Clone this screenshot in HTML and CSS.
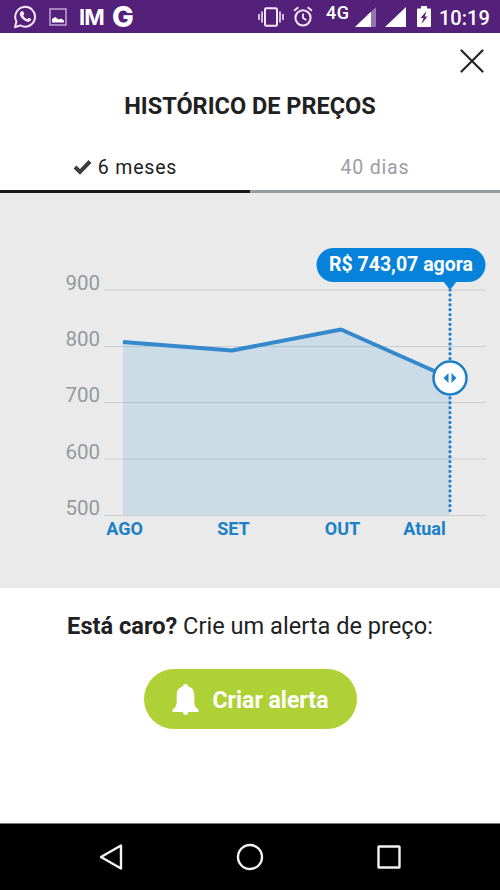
FILE: index.html
```html
<!DOCTYPE html>
<html lang="pt-BR">
<head>
  <meta charset="UTF-8">
  <meta name="viewport" content="width=device-width, initial-scale=1.0">
  <title>Histórico de preços</title>
  <link rel="stylesheet" href="styles.css">
</head>
<body>

  <!-- Status Bar -->
  <div class="status-bar">
    <div class="status-left">
      <svg class="icon-whatsapp" width="24" height="25" viewBox="0 0 24 25">
        <path d="M2 23.2 L3.4 17.4 A9.9 9.9 0 1 1 7.3 21.4 Z" fill="none" stroke="#f6e6fb" stroke-width="2" stroke-linejoin="round"/>
        <path d="M8.7 7.2 L10.2 7.3 L11.3 10 L10.2 11.5 C11.2 13.4 12.5 14.5 14.2 15.2 L15.6 13.8 L18.2 15.1 C18.2 17 16.6 18 15 17.9 C11 17.3 7.4 13.9 6.8 10.1 C6.7 8.7 7.6 7.5 8.7 7.2 Z" fill="#f6e6fb"/>
      </svg>
      <svg class="icon-image" width="18" height="18" viewBox="0 0 18 18">
        <rect x="1" y="1" width="16" height="16" fill="none" stroke="#bd9bd0" stroke-width="1.6"/>
        <path d="M3 14.5 V11 L6 9 L10 11.5 L12 10.5 L15 12.5 V14.5 Z" fill="#fff"/>
      </svg>
      <span class="app-im">IM</span>
      <span class="app-g">G</span>
    </div>
    <div class="status-right">
      <svg class="icon-vibrate" width="26" height="20" viewBox="0 0 26 20">
        <rect x="7" y="1.2" width="12" height="17.6" rx="1.2" fill="none" stroke="#f6e6fb" stroke-width="2"/>
        <path d="M1 7 V13 M4 4.5 V15.5 M22 4.5 V15.5 M25 7 V13" stroke="#f6e6fb" stroke-width="1.6"/>
      </svg>
      <svg class="icon-alarm" width="20" height="21" viewBox="0 0 20 21">
        <circle cx="10" cy="11.8" r="7.6" fill="none" stroke="#f6e6fb" stroke-width="2"/>
        <path d="M1 4.8 L5.4 1.2 M19 4.8 L14.6 1.2 M10 7.5 V12 L13.3 14" fill="none" stroke="#f6e6fb" stroke-width="1.8"/>
      </svg>
      <span class="network">4G</span>
      <svg class="icon-signal" width="22" height="20" viewBox="0 0 22 20">
        <path d="M0 20 L21 0 V20 Z" fill="#9673af"/>
        <path d="M0 20 L16 4.8 V20 Z" fill="#fff"/>
      </svg>
      <svg class="icon-signal-full" width="21" height="20" viewBox="0 0 21 20">
        <path d="M0 20 L21 0 V20 Z" fill="#fff"/>
      </svg>
      <svg class="icon-battery" width="14" height="21" viewBox="0 0 14 21">
        <path d="M4 0 H10 V2.4 H13 Q14 2.4 14 3.4 V20 Q14 21 13 21 H1 Q0 21 0 20 V3.4 Q0 2.4 1 2.4 H4 Z" fill="#fff"/>
        <path d="M9.5 5 L3.5 12 H6.5 L4.5 18 L10.5 10.5 H7.7 Z" fill="#53207a"/>
      </svg>
      <span class="clock">10:19</span>
    </div>
  </div>

  <!-- Price History -->
  <div class="header">
    <button class="close" aria-label="Fechar">
      <svg width="24" height="24" viewBox="0 0 24 24">
        <path d="M1.500 1.500 L22.500 22.500 M22.500 1.500 L1.500 22.500" stroke="#252525" stroke-width="2.2" stroke-linecap="round"/>
      </svg>
    </button>
    <h1>HISTÓRICO DE PREÇOS</h1>
  </div>

  <div class="tabs">
    <div class="tab active">
      <svg width="19" height="16" viewBox="0 0 19 16">
        <path d="M2 8 L7 13 L17 2.500" fill="none" stroke="#3d3d3d" stroke-width="4"/>
      </svg>
      <span>6 meses</span>
    </div>
    <div class="tab"><span>40 dias</span></div>
  </div>

  <div class="chart">
    <svg width="500" height="395" viewBox="0 0 500 395">
      <g class="grid-lines">
        <path d="M104 97 H486 M104 153.500 H486 M104 209.500 H486 M104 266 H486 M104 322.500 H486"/>
      </g>
      <path class="area" d="M123 149 L232 157.500 L341 136.500 L450 185 V322 H123 Z"/>
      <path class="line" d="M123 149 L232 157.500 L341 136.500 L450 185"/>
      <g class="y-labels">
        <text x="65.500" y="97">900</text>
        <text x="65.500" y="153">800</text>
        <text x="65.500" y="209">700</text>
        <text x="65.500" y="266">600</text>
        <text x="65.500" y="322">500</text>
      </g>
      <g class="x-labels">
        <text x="124.500" y="342">AGO</text>
        <text x="233.500" y="342">SET</text>
        <text x="342.500" y="342">OUT</text>
        <text x="424.500" y="342">Atual</text>
      </g>
      <path class="marker-line" d="M450 97 V322"/>
      <circle class="handle" cx="450" cy="185" r="16.500"/>
      <path class="arrows" d="M448.500 180 V190 L443.500 185 Z M451.500 180 V190 L456.500 185 Z"/>
      <path class="pill" d="M443 88 H457 L450 97 Z"/>
      <rect class="pill" x="316.500" y="55" width="169" height="34" rx="17"/>
      <text class="pill-text" x="401" y="78">R$ 743,07 agora</text>
    </svg>
  </div>

  <!-- Alert -->
  <div class="alert">
    <p><b>Está caro?</b> Crie um alerta de preço:</p>
    <button class="create">
      <svg width="27" height="31" viewBox="0 0 27 31">
        <path d="M13.500 0 C15.300 0 16 1.300 16.200 2.400 C20.300 3.400 22.300 6.700 22.300 11 V18 C22.300 22 24 24 26.500 25.500 V28 H0.500 V25.500 C3 24 4.700 22 4.700 18 V11 C4.700 6.700 6.700 3.400 10.800 2.400 C11 1.300 11.700 0 13.500 0 Z M10.800 28 H16.200 C16.200 30 15 31 13.500 31 S10.800 30 10.800 28 Z" fill="#fff"/>
      </svg>
      <span>Criar alerta</span>
    </button>
  </div>

  <!-- Navigation Bar -->
  <div class="nav-bar">
    <svg width="24" height="28" viewBox="0 0 24 28">
      <path d="M2 14 L22 2.500 V25.500 Z"/>
    </svg>
    <svg width="28" height="28" viewBox="0 0 28 28">
      <circle cx="14" cy="14" r="12"/>
    </svg>
    <svg width="24" height="24" viewBox="0 0 24 24">
      <rect x="1.500" y="1.500" width="21" height="21" rx="0.500"/>
    </svg>
  </div>

</body>
</html>
```
FILE: styles.css
```css
* {
  box-sizing: border-box;
}

body {
  font-family: Roboto, "Liberation Sans", sans-serif;
  background-color: #fff;
  color: #212121;
  margin: 0;
  height: 890px;
  display: flex;
  flex-direction: column;
  overflow: hidden;
}

svg {
  display: block;
  flex: none;
}

button {
  border: none;
  padding: 0;
  background: none;
  font-family: inherit;
  cursor: pointer;
}

.status-bar {
  height: 33px;
  flex: none;
  background-color: #53207a;
  color: #fff;
  display: flex;
  justify-content: space-between;
  padding: 0 11px 0 13px;
}

.status-left,
.status-right {
  display: flex;
  align-items: flex-start;
}

.icon-whatsapp {
  margin-top: 4px;
}

.icon-image {
  margin: 8px 0 0 12px;
}

.app-im {
  margin: 4px 0 0 12px;
  width: 25px;
  font: 700 22px/26px Inter, sans-serif;
  letter-spacing: -1px;
}

.app-g {
  margin: 1px 0 0 8px;
  font: 800 29px/31px Inter, sans-serif;
}

.icon-vibrate {
  margin-top: 7px;
}

.icon-alarm {
  margin: 6px 0 0 9px;
}

.network {
  margin: 4px 0 0 13px;
  width: 23px;
  font-size: 18px;
  line-height: 18px;
  font-weight: 500;
  letter-spacing: 0.5px;
}

.icon-signal {
  margin: 7px 0 0 6px;
}

.icon-signal-full {
  margin: 7px 0 0 8px;
}

.icon-battery {
  margin: 6px 0 0 11px;
}

.clock {
  margin: 6px 0 0 8px;
  width: 50px;
  font-size: 20px;
  line-height: 24px;
  font-weight: 500;
}

.header {
  height: 109px;
  flex: none;
  display: flex;
  flex-direction: column;
  align-items: center;
}

.close {
  align-self: flex-end;
  margin: 16px 16px 0 0;
}

h1 {
  margin: 17px 0 0;
  font-size: 23.5px;
  line-height: 32px;
  font-weight: 700;
}

.tabs {
  height: 51px;
  flex: none;
  display: flex;
}

.tab {
  flex: 1;
  display: flex;
  justify-content: center;
  align-items: center;
  gap: 6px;
  padding-top: 2px;
  border-bottom: 3px solid #969ba0;
  font-size: 19.5px;
  letter-spacing: 0.8px;
  color: #9a9ea3;
}

.tab.active {
  border-color: #18171a;
  color: #212121;
}

.chart {
  flex: none;
  background-color: #eaeaea;
}

.grid-lines {
  stroke: #cbcdce;
  stroke-width: 1.2;
}

.area {
  fill: #3393d3;
  fill-opacity: 0.16;
}

.line {
  fill: none;
  stroke: #3489cc;
  stroke-width: 4;
  stroke-linejoin: round;
}

.y-labels {
  font-size: 20.5px;
  fill: #939a9e;
}

.x-labels {
  font-size: 18px;
  font-weight: 700;
  fill: #1a80c8;
  text-anchor: middle;
}

.marker-line {
  stroke: #2080cc;
  stroke-width: 3.2;
  stroke-linecap: round;
  stroke-dasharray: 0.1 4.8;
}

.handle {
  fill: #fff;
  stroke: #1a7fc6;
  stroke-width: 2.5;
}

.arrows {
  fill: #2080cc;
}

.pill {
  fill: #0782da;
}

.pill-text {
  font-size: 19.5px;
  font-weight: 700;
  fill: #fff;
  text-anchor: middle;
}

.alert {
  flex: 1;
  display: flex;
  flex-direction: column;
  align-items: center;
}

.alert p {
  margin: 22px 0 0;
  font-size: 23.6px;
  line-height: 32px;
}

.create {
  width: 213px;
  height: 60px;
  margin-top: 27px;
  border-radius: 30px;
  background-color: #afd136;
  color: #fff;
  font-size: 23px;
  font-weight: 700;
  display: flex;
  justify-content: center;
  align-items: center;
  gap: 14px;
}

.create span {
  padding-top: 2px;
}

.nav-bar {
  height: 67px;
  flex: none;
  background-color: #000;
  border-top: 1px solid #777;
  display: flex;
  justify-content: space-between;
  align-items: center;
  padding: 0 99px;
}

.nav-bar svg {
  fill: none;
  stroke: #f2f2f2;
  stroke-width: 2.4;
  stroke-linejoin: round;
}
```
